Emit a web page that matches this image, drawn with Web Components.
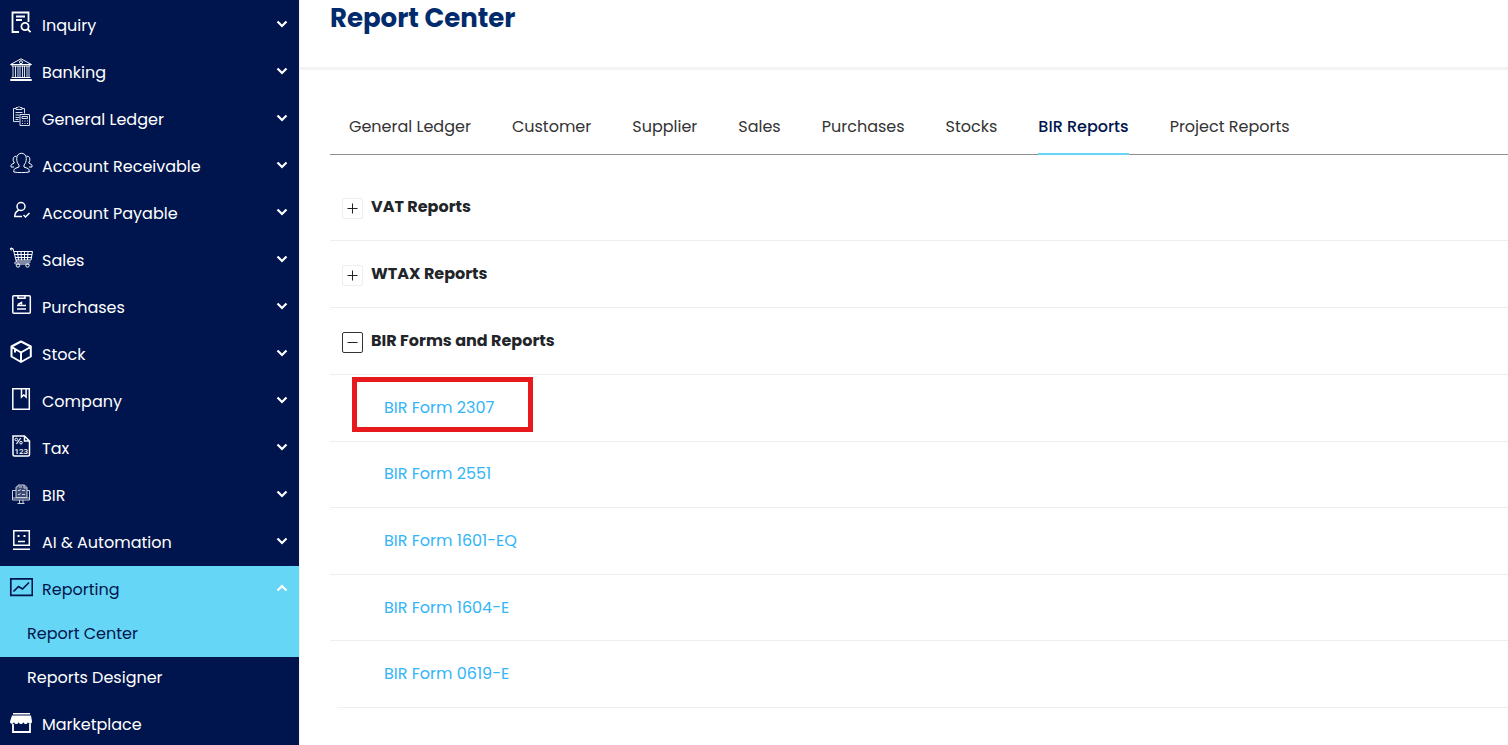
<!DOCTYPE html>
<html lang="en">
<head>
<meta charset="UTF-8">
<meta name="viewport" content="width=device-width, initial-scale=1.0">
<title>Report Center</title>
<style>
    body {
        margin: 0;
        font-family: Poppins, Inter, "Open Sans", sans-serif;
        font-size: 16px;
        line-height: 24px;
        color: #212529;
        background: #fff;
    }
</style>
</head>
<body>
<app-layout>
    <side-menu slot="menu">
        <menu-item icon="inquiry">Inquiry</menu-item>
        <menu-item icon="banking">Banking</menu-item>
        <menu-item icon="ledger">General Ledger</menu-item>
        <menu-item icon="receivable">Account Receivable</menu-item>
        <menu-item icon="payable">Account Payable</menu-item>
        <menu-item icon="sales">Sales</menu-item>
        <menu-item icon="purchases">Purchases</menu-item>
        <menu-item icon="stock">Stock</menu-item>
        <menu-item icon="company">Company</menu-item>
        <menu-item icon="tax">Tax</menu-item>
        <menu-item icon="bir">BIR</menu-item>
        <menu-item icon="automation">AI &amp; Automation</menu-item>
        <menu-item icon="reporting" open>Reporting</menu-item>
        <sub-item active>Report Center</sub-item>
        <sub-item>Reports Designer</sub-item>
        <menu-item icon="marketplace" leaf>Marketplace</menu-item>
    </side-menu>
    <page-header>Report Center</page-header>
    <report-tabs>
        <tab-link>General Ledger</tab-link>
        <tab-link>Customer</tab-link>
        <tab-link>Supplier</tab-link>
        <tab-link>Sales</tab-link>
        <tab-link>Purchases</tab-link>
        <tab-link>Stocks</tab-link>
        <tab-link active>BIR Reports</tab-link>
        <tab-link>Project Reports</tab-link>
    </report-tabs>
    <report-list>
        <report-group heading="VAT Reports"></report-group>
        <report-group heading="WTAX Reports"></report-group>
        <report-group heading="BIR Forms and Reports" open>
            <report-link marked>BIR Form 2307</report-link>
            <report-link>BIR Form 2551</report-link>
            <report-link>BIR Form 1601-EQ</report-link>
            <report-link>BIR Form 1604-E</report-link>
            <report-link>BIR Form 0619-E</report-link>
        </report-group>
    </report-list>
</app-layout>

<script>
const icons = {
    inquiry: `<path stroke-width="1.8" d="M10 22H3.500V2.500h16v9.500M7 6.500h9M7 10h6"/><circle stroke-width="1.8" cx="16" cy="16.500" r="3.600"/><path stroke-width="1.8" d="M18.600 19.200l3 3"/>`,
    banking: `<path d="M1.500 7.500L12 1.800l10.500 5.700zM3 7.500v1.500h18V7.500M2.500 20.500h19M1.500 22.500h21v1h-21z"/><circle cx="12" cy="5.200" r="1.500"/><path opacity=".85" d="M4 9v11M6.500 9v11M9 9v11M11 9v11M13.500 9v11M15.500 9v11M18 9v11M20 9v11"/>`,
    ledger: `<g opacity=".85"><path d="M10.500 17.500h-6V4.500h2.500M13 4.500h2.500v5M7 5.500v-2h2l1-1 1 1h2v2zM6.500 8.500h7M6.500 11h4M6.500 13.500h4M6.500 15.500h3"/><path d="M11 10.500h9.500v11H11zM13 12.500h5.500v2H13zM13 17h1M15.500 17h1M18 17h1M13 19.500h1M15.500 19.500h1M18 19.500h1"/></g>`,
    receivable: `<path d="M10 14c-1.500-1.500-2.300-3.500-2.300-6.500 0-7 9.600-7 9.600 0 0 3-.8 5-2.300 6.500v2l4 1.500c1 .5 1.200 1.500 1.200 3.500-4 .8-11.400.8-15.400 0 0-2 .2-3 1.200-3.500l4-1.500z"/><path d="M7.500 5.200C4.500 5 4 7 4.200 9.500L5.300 12 2.500 13.500c-.7.700-.5 1.600-.5 2.500h3M17.500 5.200c3-.2 3.500 1.800 3.300 4.300L19.700 12l2.800 1.500c.7.700.5 1.600.5 2.500h-3"/>`,
    payable: `<circle stroke-width="1.500" cx="12" cy="8.500" r="4"/><path stroke-width="1.500" d="M10 12c-2.500 1-4.200 3.300-4.200 6.500H13M14.500 17l2 2 4-4"/>`,
    sales: `<path d="M1.500 3.500h2.500L7.500 17h14M5 6.500h18.500L22 15H7M8.500 6.500l1 8.500M12 6.500l.5 8.500M15.500 6.500V15M19 6.500l-.5 8.500M5.500 9.500H23M6.500 12.500h16M7.500 17c-2.500 0-2.500 2 0 2h13"/><circle cx="9" cy="20.500" r="1.700"/><circle cx="18.500" cy="20.500" r="1.700"/><circle cx="2.300" cy="4" r="1"/>`,
    purchases: `<rect stroke-width="1.500" x="3.800" y="3.800" width="17.500" height="17.500" rx="1"/><path stroke-width="1.500" d="M9 4v2.200h7V4M8 13.500h9M8 17h9M9 12.500l3.500-2v2"/>`,
    stock: `<path stroke-width="2" stroke-linejoin="round" d="M12 2.500l9.800 5v10L12 23l-9.500-5.500v-10zM2.800 8l9.200 5.500L21.500 8M12 13.500V23M6 10v3.500"/>`,
    company: `<path stroke-width="1.500" d="M3.800 2.800h16.500v20.500H3.800z"/><path stroke-width="1.500" d="M12.500 3v8l2.300-2 2.300 2V3"/>`,
    tax: `<path stroke-width="1.500" d="M4 3h11.500L20.500 8v13.500q0 1.500-1.500 1.500H5.500Q4 23 4 21.500zM15.500 3v5h5"/><path stroke-width="1.200" d="M11.700 5L7.500 11"/><circle cx="7.300" cy="6.500" r="1.300"/><circle cx="12" cy="9.700" r="1.300"/><text aria-hidden="true" x="12.300" y="21" text-anchor="middle" stroke="none" fill="currentColor" font-family="Roboto, sans-serif" font-size="8" font-weight="500">123</text>`,
    bir: `<g opacity=".8"><path d="M7 10.500H3.500V20h17v-9.500H18M3.500 18h17M10.500 20v3M14 20v3M8.500 23.500h7"/><path fill="currentColor" fill-opacity=".3" d="M7 17.500V7l2-.5V5h6.500L18 7.500v10z"/><path d="M15 5v3h3M9 10l1 1 1.500-2M13 10.500h3M9 14l1 1 1.500-2M13 14.500h3M10 7h3"/></g>`,
    automation: `<path stroke-width="1.500" d="M4.800 3.800h15.500v14.500H4.800zM4 22.300h17M9 14.500h7"/><path stroke-width="2" d="M8.500 9h2M14.500 9h2"/>`,
    reporting: `<path stroke-width="1.700" d="M1.800 4.800h21.500v16.500H1.800zM4.500 17.500l5-5 4 2.500 6.500-6.500"/>`,
    marketplace: `<path fill="currentColor" stroke="none" d="M4 4h17v1.500H4zM3 6.500h19l1 6c0 3-3.500 3-4 .5-.7 2.800-4 2.800-4.700 0-.7 2.800-4 2.800-4.600 0-.7 2.800-4 2.800-4.700 0-.5 2.500-4 2.500-4-.5z"/><path stroke-width="1.800" d="M4 15v8h17v-8"/>`
};

class AppLayout extends HTMLElement {
    connectedCallback() {
        this.attachShadow({ mode: 'open' }).innerHTML = `
            <style>
                :host {
                    display: grid;
                    grid-template-columns: 299px minmax(0, 1fr);
                    height: 100vh;
                    overflow: hidden;
                }
                main {
                    border-left: 1px solid #f3f3f5;
                }
            </style>
            <slot name="menu"></slot>
            <main><slot></slot></main>
        `;
    }
}

class SideMenu extends HTMLElement {
    connectedCallback() {
        this.attachShadow({ mode: 'open' }).innerHTML = `
            <style>
                :host {
                    display: block;
                    background: #00154d;
                    color: #fff;
                    overflow: hidden;
                }
                nav {
                    display: flex;
                    flex-direction: column;
                    padding-top: 2px;
                }
            </style>
            <nav aria-label="Main menu"><slot></slot></nav>
        `;
    }
}

class MenuItem extends HTMLElement {
    connectedCallback() {
        const icon = icons[this.getAttribute('icon')];
        const open = this.hasAttribute('open');
        const arrow = this.hasAttribute('leaf') ? '' : `
            <svg class="arrow" width="12" height="8" viewBox="0 0 12 8" aria-hidden="true">
                <path d="${open ? 'M1.500 6.500L6 2l4.500 4.500' : 'M1.500 1.500L6 6l4.500-4.500'}"/>
            </svg>`;

        this.attachShadow({ mode: 'open' }).innerHTML = `
            <style>
                :host {
                    display: block;
                }
                :host([open]) {
                    background: #65d6f5;
                    color: #00154d;
                }
                button {
                    display: flex;
                    align-items: center;
                    gap: 9px;
                    width: 100%;
                    height: 47px;
                    padding: 0 11px 0 9px;
                    border: none;
                    background: none;
                    color: inherit;
                    font: inherit;
                    text-align: left;
                    cursor: pointer;
                }
                svg {
                    fill: none;
                    stroke: currentColor;
                    stroke-width: 1;
                    flex: none;
                }
                .icon {
                    margin-bottom: 7px;
                }
                .label {
                    flex: 1;
                }
                .arrow {
                    stroke: #fff;
                    stroke-width: 2.2;
                    margin-bottom: 3px;
                }
            </style>
            <button type="button" ${arrow ? `aria-expanded="${open}"` : ''}>
                <svg class="icon" width="24" height="24" viewBox="0 0 24 24" aria-hidden="true">${icon}</svg>
                <span class="label"><slot></slot></span>
                ${arrow}
            </button>
        `;
    }
}

class SubItem extends HTMLElement {
    connectedCallback() {
        this.attachShadow({ mode: 'open' }).innerHTML = `
            <style>
                :host {
                    display: block;
                }
                :host([active]) {
                    background: #65d6f5;
                    color: #00154d;
                }
                a {
                    display: block;
                    padding: 9px 0 11px 27px;
                    color: inherit;
                    text-decoration: none;
                }
            </style>
            <a href="#"><slot></slot></a>
        `;
    }
}

class PageHeader extends HTMLElement {
    connectedCallback() {
        this.attachShadow({ mode: 'open' }).innerHTML = `
            <style>
                :host {
                    display: block;
                    padding: 0 30px 31px;
                    border-bottom: 3px solid #f3f3f3;
                }
                h1 {
                    margin: 0;
                    font-size: 26px;
                    line-height: 36px;
                    font-weight: 700;
                    color: #012b6c;
                }
            </style>
            <h1><slot></slot></h1>
        `;
    }
}

class ReportTabs extends HTMLElement {
    connectedCallback() {
        this.attachShadow({ mode: 'open' }).innerHTML = `
            <style>
                :host {
                    display: block;
                    margin: 45px 0 0 30px;
                }
                nav {
                    display: flex;
                    gap: 41px;
                    padding-left: 19px;
                    border-bottom: 1px solid #8f8f8f;
                }
            </style>
            <nav aria-label="Report types"><slot></slot></nav>
        `;
    }
}

class TabLink extends HTMLElement {
    connectedCallback() {
        this.attachShadow({ mode: 'open' }).innerHTML = `
            <style>
                :host {
                    display: block;
                    white-space: nowrap;
                    color: #333;
                    margin-bottom: -1px;
                }
                :host([active]) {
                    color: #00154d;
                    font-weight: 500;
                }
                a {
                    display: block;
                    padding-bottom: 14px;
                    border-bottom: 2px solid transparent;
                    color: inherit;
                    text-decoration: none;
                }
                :host([active]) a {
                    border-color: #65d6f5;
                }
            </style>
            <a href="#"><slot></slot></a>
        `;
    }
}

class ReportList extends HTMLElement {
    connectedCallback() {
        this.attachShadow({ mode: 'open' }).innerHTML = `
            <style>
                :host {
                    display: block;
                    margin: 19px 0 0 30px;
                    border-bottom-left-radius: 10px;
                    overflow: hidden;
                }
            </style>
            <slot></slot>
        `;
    }
}

class ReportGroup extends HTMLElement {
    connectedCallback() {
        const open = this.hasAttribute('open');

        this.attachShadow({ mode: 'open' }).innerHTML = `
            <style>
                :host {
                    display: block;
                }
                h2 {
                    margin: 0;
                    font: inherit;
                    border-bottom: 1px solid #eee;
                }
                button {
                    display: flex;
                    align-items: center;
                    gap: 8px;
                    width: 100%;
                    padding: 21px 12px;
                    border: none;
                    background: none;
                    color: #212529;
                    font: inherit;
                    font-weight: 700;
                    text-align: left;
                    cursor: pointer;
                }
                .toggle {
                    display: grid;
                    place-items: center;
                    width: 19px;
                    height: 19px;
                    margin-top: 2px;
                    border: 1px solid #eee;
                    border-radius: 2px;
                }
                :host([open]) .toggle {
                    border-color: #333;
                }
                svg {
                    stroke: #222;
                    fill: none;
                }
                .links {
                    display: grid;
                    grid-auto-rows: 1fr;
                    min-height: 333px;
                }
            </style>
            <h2>
                <button type="button" aria-expanded="${open}">
                    <span class="toggle">
                        <svg width="11" height="11" viewBox="0 0 11 11" aria-hidden="true">
                            <path d="${open ? 'M.5 5.500h10' : 'M.5 5.500h10M5.500 .5v10'}"/>
                        </svg>
                    </span>
                    <span>${this.getAttribute('heading')}</span>
                </button>
            </h2>
            ${open ? '<div class="links"><slot></slot></div>' : ''}
        `;
    }
}

class ReportLink extends HTMLElement {
    connectedCallback() {
        this.attachShadow({ mode: 'open' }).innerHTML = `
            <style>
                :host {
                    display: flex;
                    align-items: center;
                    position: relative;
                    padding-left: 54px;
                    border-bottom: 1px solid #eee;
                }
                a {
                    color: #33b5f7;
                    text-decoration: none;
                }
                /* callout box drawn over the row */
                :host([marked])::after {
                    content: "";
                    position: absolute;
                    left: 22px;
                    top: 2px;
                    width: 171px;
                    height: 45px;
                    border: 5px solid #e8191c;
                    pointer-events: none;
                }
            </style>
            <a href="#"><slot></slot></a>
        `;
    }
}

customElements.define('app-layout', AppLayout);
customElements.define('side-menu', SideMenu);
customElements.define('menu-item', MenuItem);
customElements.define('sub-item', SubItem);
customElements.define('page-header', PageHeader);
customElements.define('report-tabs', ReportTabs);
customElements.define('tab-link', TabLink);
customElements.define('report-list', ReportList);
customElements.define('report-group', ReportGroup);
customElements.define('report-link', ReportLink);
</script>
</body>
</html>
